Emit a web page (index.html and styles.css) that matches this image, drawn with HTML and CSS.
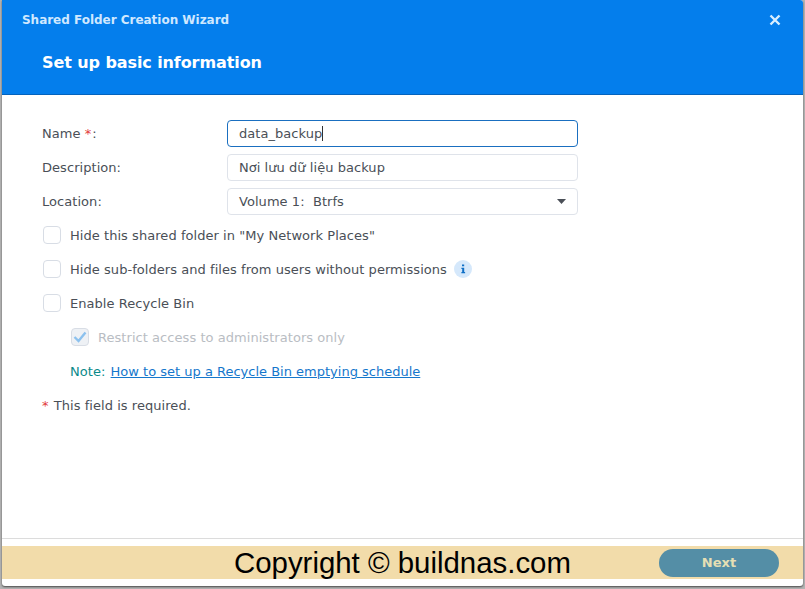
FILE: index.html
```html
<!DOCTYPE html>
<html lang="en">
<head>
<meta charset="utf-8">
<title>Shared Folder Creation Wizard</title>
<link rel="stylesheet" href="styles.css">
</head>
<body>
<div class="window">
  <header class="header">
    <div class="titlebar">
      <span class="app-title">Shared Folder Creation Wizard</span>
      <svg class="close" width="12" height="12" viewBox="0 0 12 12"><path d="M1.500 1.500l9 9M10.500 1.500l-9 9" stroke="#d8eeff" stroke-width="2.400" fill="none"/></svg>
    </div>
    <h1 class="step-title">Set up basic information</h1>
  </header>
  <main class="content">
    <div class="field">
      <label class="label">Name <span class="req star">*</span>:</label>
      <div class="input focused">data_backup<span class="caret"></span></div>
    </div>
    <div class="field">
      <label class="label">Description:</label>
      <div class="input">Nơi lưu dữ liệu backup</div>
    </div>
    <div class="field">
      <label class="label">Location:</label>
      <div class="input select">
        <span>Volume 1:&nbsp; Btrfs</span>
        <svg width="9" height="5" viewBox="0 0 9 5"><path d="M0 0h9L4.500 5z" fill="#4a4f57"/></svg>
      </div>
    </div>
    <div class="check-row"><span class="box"></span><span>Hide this shared folder in "My Network Places"</span></div>
    <div class="check-row"><span class="box"></span><span>Hide sub-folders and files from users without permissions</span>
      <svg class="info" width="18" height="18" viewBox="0 0 18 18"><circle cx="9" cy="9" r="9" fill="#d5e8fb"/><path d="M8 4.500h2.200v1.800H8zM7.400 7.800h2.800v4.200h.9v1.200H7.400V12h.8V9H7.400z" fill="#0f6fc6"/></svg>
    </div>
    <div class="check-row"><span class="box"></span><span>Enable Recycle Bin</span></div>
    <div class="check-row sub disabled">
      <span class="box checked"><svg width="14" height="12" viewBox="0 0 14 12"><path d="M1.500 6l4 4 7-8.500" stroke="#8cc1ee" stroke-width="2.400" fill="none"/></svg></span>
      <span>Restrict access to administrators only</span>
    </div>
    <div class="note-row sub"><span class="note">Note:</span> <a class="link" href="#">How to set up a Recycle Bin emptying schedule</a></div>
    <p class="required"><span class="req">*</span> This field is required.</p>
  </main>
  <footer class="footer">
    <div class="band">
      <span class="copyright">Copyright © buildnas.com</span>
      <button class="next" type="button">Next</button>
    </div>
  </footer>
</div>
</body>
</html>
```
FILE: styles.css
```css
* { box-sizing: border-box; }
html, body { margin: 0; height: 100%; }
body {
  background: #b4b4b4;
  font-family: "DejaVu Sans", sans-serif;
  font-size: 13px;
  letter-spacing: 0.05px;
  color: #4a4f57;
  overflow: hidden;
}
.window {
  width: 801px;
  height: 586px;
  margin-left: 2px;
  background: #fff;
  border-radius: 0 3px 3px 3px;
  box-shadow: 0 1px 2px rgba(0, 0, 0, 0.6);
  overflow: hidden;
  display: flex;
  flex-direction: column;
}
.header {
  height: 95px;
  flex: none;
  background: #047eec;
  border-bottom: 1px solid #0463bd;
  padding: 12px 20px 0 20px;
}
.titlebar { display: flex; justify-content: space-between; align-items: center; height: 15px; }
.app-title { font-size: 12px; font-weight: 700; letter-spacing: -0.02px; color: #cfe8ff; }
.close { margin-right: 2px; }
.step-title {
  margin: 26px 0 0 20px;
  font-size: 16px;
  line-height: 20px;
  font-weight: 700;
  letter-spacing: -0.09px;
  color: #fff;
}
.content { flex: 1; padding: 25px 40px 0; }
.field { display: flex; align-items: center; height: 27px; margin-bottom: 7px; }
.label { width: 185px; flex: none; }
.req { color: #e23b3b; }
.star { margin-right: 1px; }
.input {
  width: 351px;
  height: 27px;
  padding: 0 11px;
  line-height: 25px;
  border: 1px solid #dfe3ea;
  border-radius: 4px;
  display: flex;
  align-items: center;
}
.input.focused { border-color: #1a6fc0; }
.caret { width: 1px; height: 15px; background: #333; }
.select { justify-content: space-between; padding-right: 11px; }
.check-row { display: flex; align-items: center; height: 18px; margin: 11px 0 16px; }
.check-row + .check-row { margin-top: 0; }
.box {
  width: 18px;
  height: 18px;
  flex: none;
  margin: 0 9px 0 1px;
  border: 1px solid #d8dde5;
  border-radius: 4px;
  display: flex;
  align-items: center;
  justify-content: center;
}
.box.checked { background: #eef1f5; }
.sub { margin-left: 28px; }
.disabled { color: #b9bdc3; }
.info { margin-left: 7px; }
.note-row { height: 18px; line-height: 18px; margin-top: 17px; margin-bottom: 16px; }
.note { color: #0b8a8a; margin-right: 1px; }
.link { color: #1577cc; letter-spacing: 0; }
.required { margin: 0; line-height: 18px; }
.required .req { margin-right: 1px; }
.footer { height: 48px; flex: none; border-top: 1px solid #dcdcdc; padding-top: 7px; }
.band {
  position: relative;
  height: 33px;
  background: #f2dcaa;
  display: flex;
  justify-content: flex-end;
  align-items: center;
  padding-right: 24px;
}
.copyright {
  position: absolute;
  left: 232px;
  top: 0;
  font-family: "Liberation Sans", sans-serif;
  font-size: 29.400px;
  letter-spacing: 0;
  line-height: 34px;
  color: #000;
}
.next {
  width: 120px;
  height: 28px;
  border: 0;
  border-radius: 14px;
  background: #548ea6;
  color: #e6dfb4;
  font: 700 13px "DejaVu Sans", sans-serif;
}
```
